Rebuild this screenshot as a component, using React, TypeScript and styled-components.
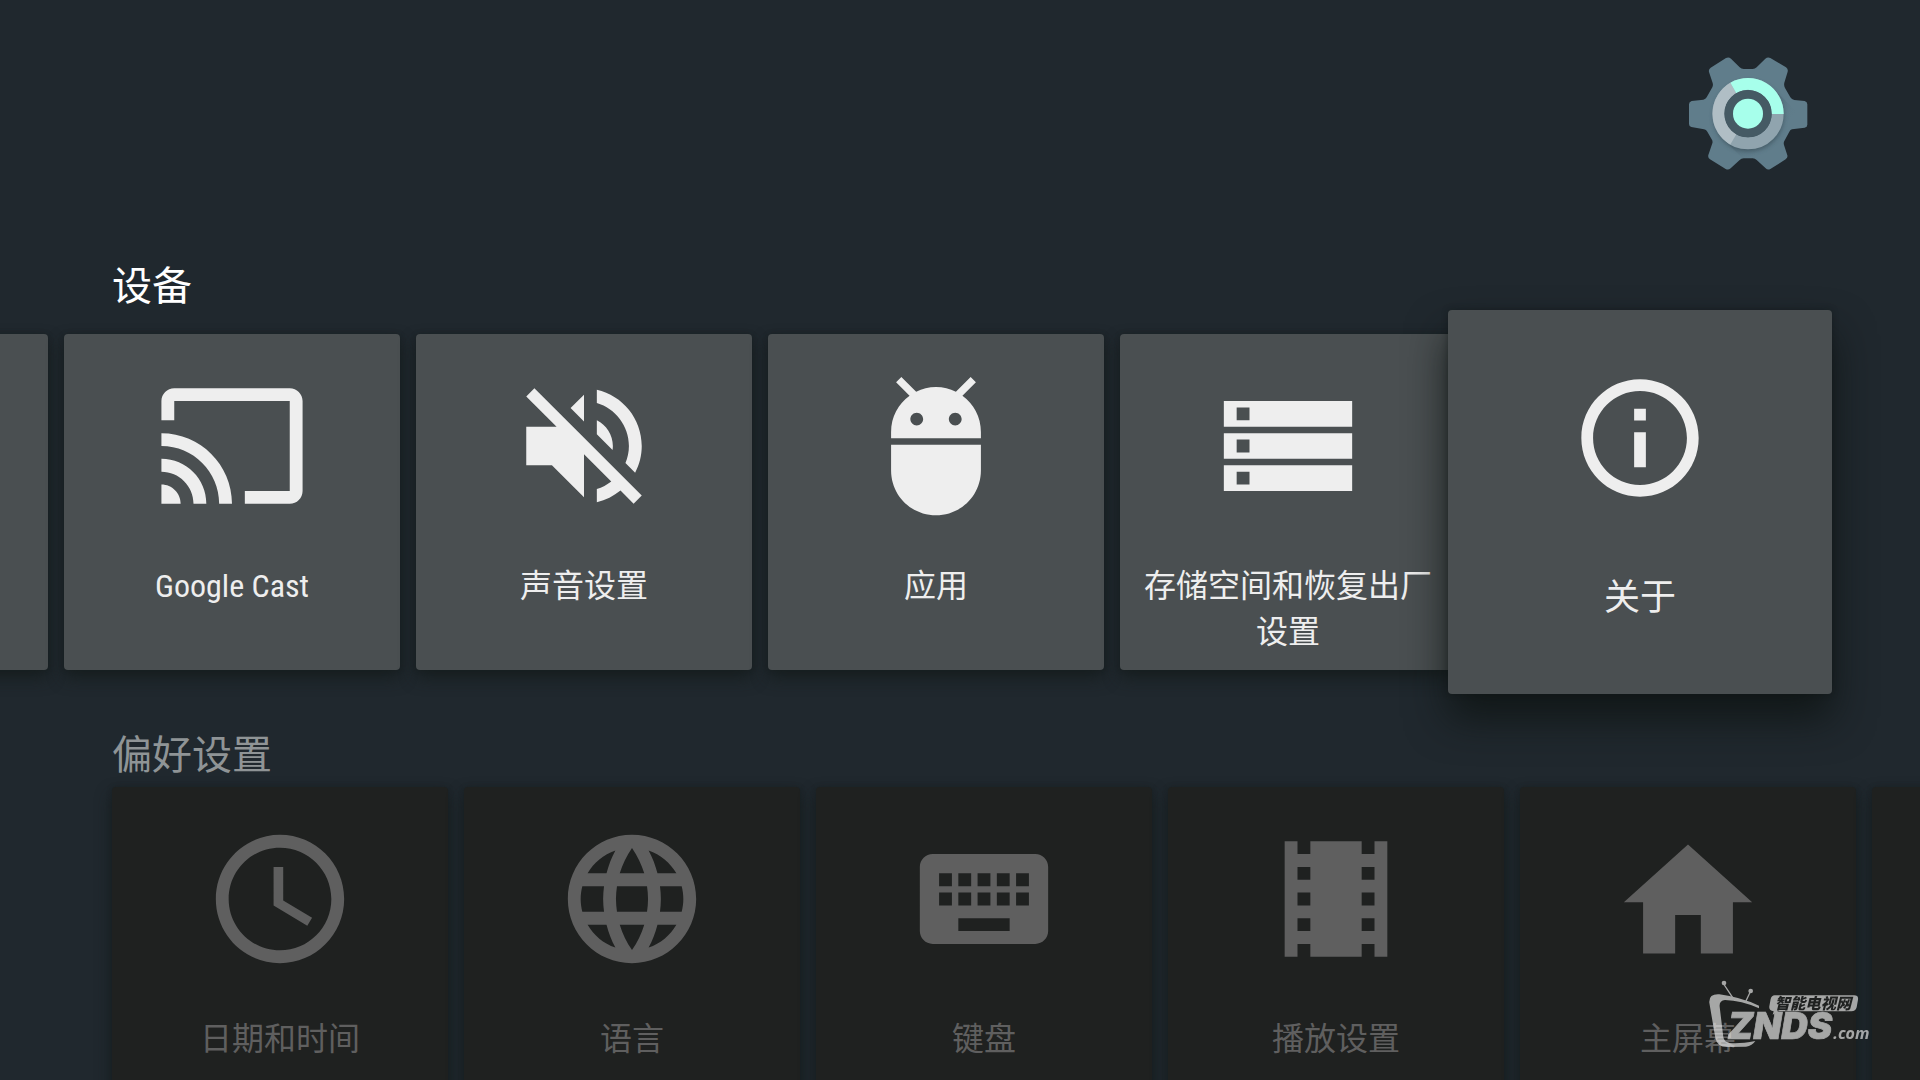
import React from 'react';
import styled, { createGlobalStyle, css } from 'styled-components';

const GlobalStyle = createGlobalStyle`
  *, *::before, *::after { box-sizing: border-box; }
  html, body { margin: 0; background: #20282e; }
`;

const Page = styled.main`
  position: relative;
  height: 100vh;
  overflow: hidden;
  background: #20282e;
  color: #eeeeee;
  font-family: 'Roboto Condensed', Roboto, 'Noto Sans CJK SC', sans-serif;
`;

const Header = styled.header`
  display: flex;
  justify-content: flex-end;
  padding: 40px 90px 0;
`;

const Gear = styled.svg`
  display: block;
  width: 160px;
  height: 150px;
`;

const Section = styled.section<{ $first?: boolean }>`
  padding-top: ${(p) => (p.$first ? 68 : 57)}px;
`;

const Heading = styled.h2<{ $dim?: boolean }>`
  margin: 0 112px ${(p) => (p.$dim ? 2 : 18)}px;
  font-size: 40px;
  font-weight: 400;
  line-height: 58px;
  color: ${(p) => (p.$dim ? '#8f9496' : '#ffffff')};
`;

const Row = styled.div<{ $scrolled?: boolean }>`
  display: flex;
  gap: 16px;
  padding-left: ${(p) => (p.$scrolled ? 0 : 112)}px;
  margin-left: ${(p) => (p.$scrolled ? -288 : 0)}px;
`;

const focused = css`
  z-index: 1;
  gap: 46px;
  width: 384px;
  height: 384px;
  margin: -24px;
  padding: 40px 24px 0;
  font-size: 36px;
  line-height: 52px;
  box-shadow: 0 24px 40px rgba(14, 20, 19, 0.85), 0 0 6px rgba(14, 20, 19, 0.4);
`;

const Card = styled.button<{ $dim?: boolean; $focused?: boolean }>`
  position: relative;
  display: flex;
  flex: none;
  flex-direction: column;
  align-items: center;
  gap: 40px;
  width: 336px;
  height: 336px;
  padding: 35px 20px 0;
  border: 0;
  border-radius: 4px;
  outline: 0;
  background: ${(p) => (p.$dim ? '#1f2120' : '#4a4f51')};
  color: ${(p) => (p.$dim ? '#5f5f5f' : '#eeeeee')};
  font-family: inherit;
  font-size: 32px;
  line-height: 46px;
  box-shadow: 0 8px 16px rgba(20, 27, 27, 0.8), 0 0 5px rgba(20, 27, 27, 0.4);
  ${(p) => p.$focused && focused}
`;

const Icon = styled.svg<{ $focused?: boolean }>`
  display: block;
  flex: none;
  width: ${(p) => (p.$focused ? 176 : 154)}px;
  height: ${(p) => (p.$focused ? 176 : 154)}px;
  fill: currentColor;
`;

const Watermark = styled.svg`
  position: absolute;
  right: 30px;
  bottom: 10px;
  width: 200px;
  height: 110px;
  opacity: 0.66;
`;

type Item = { label: string; path: string; box?: string; focused?: boolean };

const device: Item[] = [
  { label: '', path: '' },
  {
    label: 'Google Cast',
    path: 'M1 18v3h3c0-1.66-1.34-3-3-3zM1 14v2c2.76 0 5 2.24 5 5h2c0-3.87-3.13-7-7-7zM1 10v2c4.97 0 9 4.03 9 9h2c0-6.08-4.93-11-11-11zM21 3H3c-1.1 0-2 .9-2 2v3h2V5h18v14h-7v2h7c1.1 0 2-.9 2-2V5c0-1.1-.9-2-2-2z',
  },
  {
    label: '声音设置',
    path: 'M16.5 12c0-1.77-1.02-3.29-2.5-4.03v2.21l2.45 2.45c.03-.2.05-.41.05-.63zM19 12c0 .94-.2 1.82-.54 2.64l1.51 1.51C20.63 14.91 21 13.5 21 12c0-4.28-2.99-7.86-7-8.77v2.06c2.89.86 5 3.54 5 6.71zM4.27 3L3 4.27 7.73 9H3v6h4l5 5v-6.73l4.25 4.25c-.67.52-1.42.93-2.25 1.18v2.06c1.38-.31 2.63-.95 3.69-1.81L19.73 21 21 19.73l-9-9L4.27 3zM12 4L9.91 6.09 12 8.18V4z',
  },
  {
    label: '应用',
    box: '0 0.2 24 24',
    path: 'M5 16c0 3.87 3.13 7 7 7s7-3.13 7-7v-4H5v4zM16.12 4.37l2.1-2.1-.82-.83-2.3 2.31C14.16 3.28 13.12 3 12 3s-2.16.28-3.09.75L6.6 1.44l-.82.83 2.1 2.1C6.14 5.64 5 7.68 5 10v1h14v-1c0-2.32-1.14-4.36-2.88-5.63zM9 9c-.55 0-1-.45-1-1s.45-1 1-1 1 .45 1 1-.45 1-1 1zm6 0c-.55 0-1-.45-1-1s.45-1 1-1 1 .45 1 1-.45 1-1 1z',
  },
  {
    label: '存储空间和恢复出厂设置',
    path: 'M2 5h20v4H2zM4 6v2h2V6zM2 10h20v4H2zM4 11v2h2v-2zM2 15h20v4H2zM4 16v2h2v-2z',
  },
  {
    label: '关于',
    focused: true,
    box: '-3 -3 30 30',
    path: 'M11 17h2v-6h-2v6zm1-15C6.48 2 2 6.48 2 12s4.48 10 10 10 10-4.48 10-10S17.52 2 12 2zm0 18c-4.41 0-8-3.59-8-8s3.59-8 8-8 8 3.59 8 8-3.59 8-8 8zM11 9h2V7h-2v2z',
  },
];

const preferences: Item[] = [
  {
    label: '日期和时间',
    path: 'M11.99 2C6.47 2 2 6.48 2 12s4.47 10 9.99 10C17.52 22 22 17.52 22 12S17.52 2 11.99 2zM12 20c-4.42 0-8-3.58-8-8s3.58-8 8-8 8 3.58 8 8-3.58 8-8 8zM12.5 7H11v6l5.25 3.15.75-1.23-4.5-2.67z',
  },
  {
    label: '语言',
    path: 'M11.99 2C6.47 2 2 6.48 2 12s4.47 10 9.99 10C17.52 22 22 17.52 22 12S17.52 2 11.99 2zm6.93 6h-2.95c-.32-1.25-.78-2.45-1.38-3.56 1.84.63 3.37 1.91 4.33 3.56zM12 4.04c.83 1.2 1.48 2.53 1.91 3.96h-3.82c.43-1.43 1.08-2.76 1.91-3.96zM4.26 14C4.1 13.36 4 12.69 4 12s.1-1.36.26-2h3.38c-.08.66-.14 1.32-.14 2 0 .68.06 1.34.14 2H4.26zm.82 2h2.95c.32 1.25.78 2.45 1.38 3.56-1.84-.63-3.37-1.9-4.33-3.56zm2.95-8H5.08c.96-1.66 2.49-2.93 4.33-3.56C8.81 5.55 8.35 6.75 8.03 8zM12 19.96c-.83-1.2-1.48-2.53-1.91-3.96h3.82c-.43 1.43-1.08 2.76-1.91 3.96zM14.34 14H9.66c-.09-.66-.16-1.32-.16-2 0-.68.07-1.35.16-2h4.68c.09.65.16 1.32.16 2 0 .68-.07 1.34-.16 2zm.25 5.56c.6-1.11 1.06-2.31 1.38-3.56h2.95c-.96 1.65-2.49 2.93-4.33 3.56zM16.36 14c.08-.66.14-1.32.14-2 0-.68-.06-1.34-.14-2h3.38c.16.64.26 1.31.26 2s-.1 1.36-.26 2h-3.38z',
  },
  {
    label: '键盘',
    path: 'M20 5H4c-1.1 0-2 .9-2 2v10c0 1.1.9 2 2 2h16c1.1 0 2-.9 2-2V7c0-1.1-.9-2-2-2zM5 8h2v2H5zM8 8h2v2H8zM11 8h2v2h-2zM14 8h2v2h-2zM17 8h2v2h-2zM5 11h2v2H5zM8 11h2v2H8zM11 11h2v2h-2zM14 11h2v2h-2zM17 11h2v2h-2zM8 15h8v2H8z',
  },
  {
    label: '播放设置',
    path: 'M18 3v2h-2V3H8v2H6V3H4v18h2v-2h2v2h8v-2h2v2h2V3h-2zM8 17H6v-2h2v2zm0-4H6v-2h2v2zm0-4H6V7h2v2zm10 8h-2v-2h2v2zm0-4h-2v-2h2v2zm0-4h-2V7h2v2z',
  },
  { label: '主屏幕', box: '0 -0.5 24 24', path: 'M10 20v-6h4v6h5v-8h3L12 3 2 12h3v8z' },
  { label: '', path: '' },
];

function CardRow({ items, dim, scrolled }: { items: Item[]; dim?: boolean; scrolled?: boolean }) {
  return (
    <Row $scrolled={scrolled}>
      {items.map((item, i) => (
        <Card key={i} type="button" $dim={dim} $focused={item.focused}>
          <Icon viewBox={item.box ?? '0 0 24 24'} $focused={item.focused} aria-hidden="true">
            <path d={item.path} fillRule="evenodd" />
          </Icon>
          {item.label && <span>{item.label}</span>}
        </Card>
      ))}
    </Row>
  );
}

function SettingsGear() {
  return (
    <Gear viewBox="0 0 480 450" aria-hidden="true">
      <defs>
        <linearGradient id="cast" x1="0" y1="0" x2="1" y2="1">
          <stop offset="0.35" stopColor="#3f5662" stopOpacity="0.5" />
          <stop offset="0.65" stopColor="#607d8b" stopOpacity="0" />
        </linearGradient>
        <filter id="soft" x="-20%" y="-20%" width="140%" height="140%">
          <feGaussianBlur stdDeviation="6" />
        </filter>
      </defs>
      <path
        fill="#607d8b"
        d="M168 54Q176 50 183 56L209 82Q214 87 221 87H248Q255 87 260 82L286 56Q293 50 301 54L348 82Q355 87 353 95L343 128Q341 136 345 144L361 172Q365 178 373 180L404 183Q412 185 412 193V254Q412 261 404 263L366 268Q361 269 358 275L343 303Q340 308 342 315L352 346Q354 353 347 358L301 387Q293 391 287 385L260 360Q255 355 248 355H221Q214 355 209 360L182 385Q175 391 167 387L120 358Q113 353 115 345L127 310Q129 304 125 298L112 275Q109 269 102 268L64 261Q57 259 57 252V193Q57 185 65 183L100 179Q107 178 110 172L127 142Q130 136 128 129L117 96Q115 88 122 83Z"
      />
      <path fill="url(#cast)" d="M310 146L384 220L366 268L343 310L352 350L293 389L255 355H218L158 296Z" />
      <circle cx="236" cy="229" r="106" fill="#30444e" opacity="0.55" filter="url(#soft)" />
      <circle cx="234" cy="221" r="89" fill="none" stroke="#90a4ae" strokeWidth="36" />
      <path fill="none" stroke="#b0bec5" strokeWidth="36" d="M190 298A89 89 0 0 1 190 144" />
      <path fill="none" stroke="#a7ffeb" strokeWidth="36" d="M190 144A89 89 0 0 1 323 222" />
      <circle cx="234" cy="221" r="71" fill="#455a64" />
      <circle cx="234" cy="221" r="45" fill="#a7ffeb" />
    </Gear>
  );
}

function ZndsMark() {
  return (
    <Watermark viewBox="0 0 600 330" role="img" aria-label="ZNDS.com 智能电视网" fill="#ececec">
      <circle cx="102" cy="69" r="7" />
      <circle cx="182" cy="93" r="7" />
      <path d="M101 72L128 113M181 95L166 127" stroke="#ececec" strokeWidth="4" />
      <path d="M207 137Q150 111 88 103Q56 101 58 128L76 234Q82 262 112 261L168 260Q187 257 196 243Q150 252 119 249Q103 247 100 232L89 140Q87 122 105 120Q154 121 207 145Z" />
      <path d="M254 106H492Q506 106 504 119L500 142Q497 154 484 154H265L248 164L251 154Q236 152 238 139L242 117Q245 106 254 106Z" />
      <text
        x="254"
        y="147"
        fill="#1f2120"
        fontFamily="'Noto Sans CJK SC', sans-serif"
        fontWeight="900"
        fontSize="46"
        fontStyle="italic"
      >
        智能电视网
      </text>
      <text
        x="113"
        y="237"
        fontFamily="Inter, sans-serif"
        fontWeight="900"
        fontStyle="italic"
        fontSize="110"
        stroke="#ececec"
        strokeWidth="2"
      >
        ZNDS
      </text>
      <text x="430" y="236" fontFamily="'Open Sans', sans-serif" fontWeight="700" fontStyle="italic" fontSize="48">
        .com
      </text>
    </Watermark>
  );
}

export default function App() {
  return (
    <Page lang="zh-CN">
      <GlobalStyle />
      <Header>
        <SettingsGear />
      </Header>
      <Section $first>
        <Heading>设备</Heading>
        <CardRow items={device} scrolled />
      </Section>
      <Section>
        <Heading $dim>偏好设置</Heading>
        <CardRow items={preferences} dim />
      </Section>
      <ZndsMark />
    </Page>
  );
}
